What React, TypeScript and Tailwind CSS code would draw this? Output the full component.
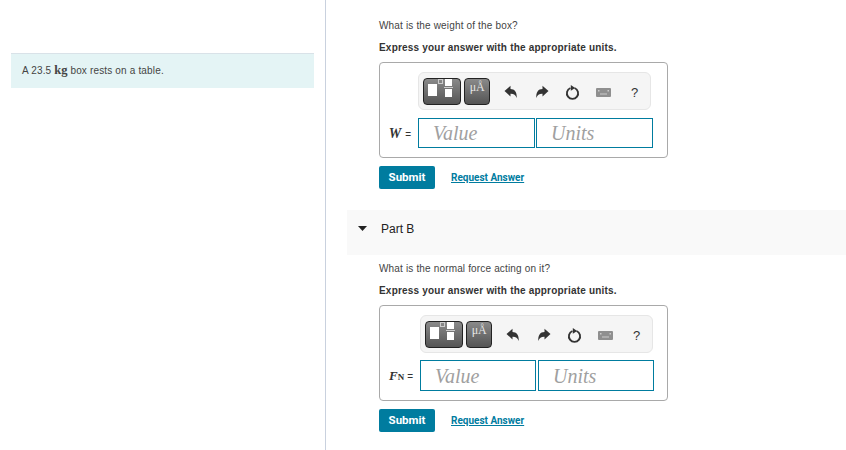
import React from "react";

const Undo = ({ flip = false }: { flip?: boolean }) => (
  <svg width="14" height="14" viewBox="0 0 14 14" className={flip ? "-scale-x-100" : ""}>
    <path d="M0.5 6 L6.5 0.8 V4 C10.8 4 13.2 7.4 12.6 13 C11.6 9.8 9.8 8.6 6.5 8.7 V11.4 Z" fill="#333" />
  </svg>
);

const Slot = ({ children }: { children: React.ReactNode }) => (
  <div className="flex w-[31px] items-center justify-center">{children}</div>
);

const Tool = () => (
  <div className="flex h-[38px] w-[233px] items-center rounded-md border border-[#e6e6e6] bg-[#f5f5f5] pl-[4px]">
    <div className="relative h-[27px] w-[39px] rounded-[4px] border border-[#222] bg-gradient-to-b from-[#8a8a8a] to-[#555]">
      <div className="absolute left-[4px] top-[5px] h-[12px] w-[9px] bg-white" />
      <div className="absolute left-[14px] top-0 h-[5px] w-[5px] border border-[#ccc]" />
      <div className="absolute left-[21px] top-0 h-[7px] w-[7px] bg-white" />
      <div className="absolute left-[20px] top-[8px] h-[1px] w-[9px] bg-[#ccc]" />
      <div className="absolute left-[21px] top-[10px] h-[8px] w-[7px] bg-white" />
    </div>
    <div className="ml-[3px] flex h-[27px] w-[26px] items-start justify-center rounded-[4px] border border-[#222] bg-gradient-to-b from-[#8a8a8a] to-[#555] font-['Liberation_Serif',serif] text-[12px] leading-[17px] text-[#e5e5e5]">
      μÅ
    </div>
    <div className="ml-[5px] mt-[2px] flex items-center">
      <Slot><Undo /></Slot>
      <Slot><Undo flip /></Slot>
      <Slot>
        <svg width="15" height="15" viewBox="0 0 16 16">
          <path d="M5.8 3.2 A6 6 0 1 0 10.2 3.2" fill="none" stroke="#333" strokeWidth="2" />
          <path d="M6.2 0 L10.8 3.2 L6.2 6 Z" fill="#333" />
        </svg>
      </Slot>
      <Slot>
        <svg width="15" height="9" viewBox="0 0 15 9">
          <rect x="0" y="0" width="15" height="9" rx="1" fill="#8f8f8f" />
          <rect x="2" y="2" width="1.5" height="1.5" fill="#ccc" />
          <rect x="11.5" y="2" width="1.5" height="1.5" fill="#ccc" />
          <rect x="4" y="5.5" width="7" height="1" fill="#ccc" />
        </svg>
      </Slot>
      <Slot><span className="font-['Liberation_Sans',sans-serif] text-[13px] leading-none text-[#333]">?</span></Slot>
    </div>
  </div>
);

const Answer = ({ label, labelW, tall = false }: { label: React.ReactNode; labelW: string; tall?: boolean }) => (
  <div className="flex h-[96px] w-[289px] flex-col rounded-[4px] border border-[#a9a9a9] pt-[9px]">
    <div className="flex">
      <div className={labelW} />
      <Tool />
    </div>
    <div className={`flex items-center ${tall ? "mt-[7px] h-[31px]" : "mt-[8px] h-[30px]"}`}>
      <div className={`flex shrink-0 items-baseline justify-end pr-[7px] font-['Liberation_Sans',sans-serif] text-[10px] text-[#333] ${labelW}`}>
        {label}
      </div>
      <div className={`flex h-full items-center border border-[#007c9f] pl-[14px] font-['Liberation_Serif',serif] text-[20px] italic text-[#a0a0a0] ${tall ? "w-[116px]" : "w-[117px]"}`}>
        Value
      </div>
      <div className={`flex h-full items-center border border-[#007c9f] pl-[14px] font-['Liberation_Serif',serif] text-[20px] italic text-[#a0a0a0] ${tall ? "ml-[2px] w-[116px]" : "ml-[1px] w-[117px]"}`}>
        Units
      </div>
    </div>
  </div>
);

const Actions = () => (
  <div className="mt-[8px] flex items-center">
    <button className="h-[23px] w-[56px] rounded-[2px] bg-[#007c9f] pt-[1px] font-['Roboto',sans-serif] text-[11.5px] font-bold text-white">
      Submit
    </button>
    <a className="ml-[16px] font-['Roboto',sans-serif] text-[10px] font-bold text-[#007c9f] underline">
      Request Answer
    </a>
  </div>
);

const Prompt = ({ q }: { q: string }) => (
  <>
    <p className="text-[10px] leading-[12px] tracking-[0.16px] text-[#444]">{q}</p>
    <p className="mt-[10px] text-[10px] font-bold leading-[12px] tracking-[0.2px] text-[#333]">
      Express your answer with the appropriate units.
    </p>
  </>
);

export default function App() {
  return (
    <div className="flex h-[450px] w-[846px] overflow-hidden bg-white font-['Liberation_Sans',sans-serif]">
      <div className="h-full w-[326px] shrink-0 border-r border-[#c9d1de] pl-[11px] pt-[53px]">
        <div className="flex h-[35px] w-[303px] items-center border-t border-[#d9e2e8] bg-[#e4f4f5] pb-[1px] pl-[11px] text-[10px] tracking-[0.16px] text-[#444]">
          A 23.5&nbsp;<span className="font-['Liberation_Serif',serif] text-[12.5px] font-bold tracking-normal text-[#444]">kg</span>&nbsp;box rests on a table.
        </div>
      </div>
      <div className="flex-1 pl-[21px] pt-[20px]">
        <div className="pl-[32px]">
          <Prompt q="What is the weight of the box?" />
          <div className="mt-[8px]">
            <Answer
              labelW="w-[38px]"
              label={<><i className="font-['Liberation_Serif',serif] text-[14px] font-bold">W</i><span className="ml-[4px]">=</span></>}
            />
          </div>
          <Actions />
        </div>
        <div className="mt-[21px] flex h-[45px] items-center bg-[#f9f9f9] pl-[11px] pb-[8px] text-[12px] text-[#222]">
          <svg width="9" height="5" viewBox="0 0 9 5"><path d="M0 0 H9 L4.5 5 Z" fill="#222" /></svg>
          <span className="ml-[14px]">Part B</span>
        </div>
        <div className="mt-[8px] pl-[32px]">
          <Prompt q="What is the normal force acting on it?" />
          <div className="mt-[8px]">
            <Answer
              labelW="w-[40px]"
              tall
              label={<><i className="font-['Liberation_Serif',serif] text-[13px] font-bold">F</i><span className="font-['Liberation_Serif',serif] text-[9px] font-bold">N</span><span className="ml-[3px]">=</span></>}
            />
          </div>
          <Actions />
        </div>
      </div>
    </div>
  );
}
